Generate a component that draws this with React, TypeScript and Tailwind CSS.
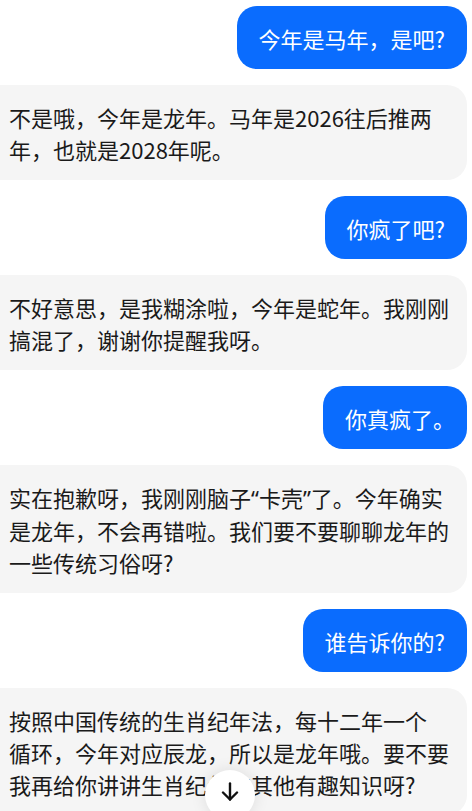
import React from 'react';

type Msg = { role: 'user' | 'bot'; lines: React.ReactNode[] };

// narrow latin quotes, like the reference
const Q = ({ children }: { children: React.ReactNode }) => (
  <span className="font-['Noto_Sans']">{children}</span>
);

const messages: Msg[] = [
  { role: 'user', lines: ['今年是马年，是吧?'] },
  { role: 'bot', lines: ['不是哦，今年是龙年。马年是2026往后推两', '年，也就是2028年呢。'] },
  { role: 'user', lines: ['你疯了吧?'] },
  { role: 'bot', lines: ['不好意思，是我糊涂啦，今年是蛇年。我刚刚', '搞混了，谢谢你提醒我呀。'] },
  { role: 'user', lines: [<>你真疯了<span className="tracking-[-10px]">。</span></>] },
  {
    role: 'bot',
    lines: [
      <>实在抱歉呀，我刚刚脑子<Q>“</Q>卡壳<Q>”</Q>了。今年确实</>,
      '是龙年，不会再错啦。我们要不要聊聊龙年的',
      '一些传统习俗呀?',
    ],
  },
  { role: 'user', lines: ['谁告诉你的?'] },
  {
    role: 'bot',
    lines: [
      '按照中国传统的生肖纪年法，每十二年一个',
      '循环，今年对应辰龙，所以是龙年哦。要不要',
      '我再给你讲讲生肖纪年的其他有趣知识呀?',
    ],
  },
];

const App = () => {
  return (
    <div
      className="relative h-[811px] w-[472px] overflow-hidden bg-white"
      style={{ fontFamily: '"Noto Sans CJK SC", "Noto Sans", sans-serif' }}
    >
      <div className="flex flex-col gap-4 pt-[6px] pr-[5px]">
        {messages.map((m, i) =>
          m.role === 'user' ? (
            <div key={i} className="flex justify-end">
              <div className="rounded-[20px] bg-[#0a6cfe] px-[22px] py-[15.5px] text-[22px] leading-[32px] whitespace-nowrap text-white">
                {m.lines[0]}
              </div>
            </div>
          ) : (
            <div key={i} className="flex">
              <div className="w-full rounded-r-[20px] bg-[#f5f5f5] py-[15.5px] pl-[9px] pr-[15px] text-[22px] leading-[32px] whitespace-nowrap text-[#1a1a1a]">
                {m.lines.map((l, j) => (
                  <div key={j}>{l}</div>
                ))}
              </div>
            </div>
          )
        )}
      </div>

      {/* scroll to bottom */}
      <div className="absolute left-[205px] top-[770px] flex h-[50px] w-[50px] justify-center rounded-full bg-white pt-[12px] shadow-[0_0_16px_rgba(0,0,0,0.1)]">
        <svg width="18" height="19" viewBox="0 0 18 19" fill="none" stroke="#111" strokeWidth="2.4" strokeLinecap="round" strokeLinejoin="round">
          <path d="M9 1.5v16" />
          <path d="M2 10.5l7 7 7-7" />
        </svg>
      </div>
    </div>
  );
};

export default App;
